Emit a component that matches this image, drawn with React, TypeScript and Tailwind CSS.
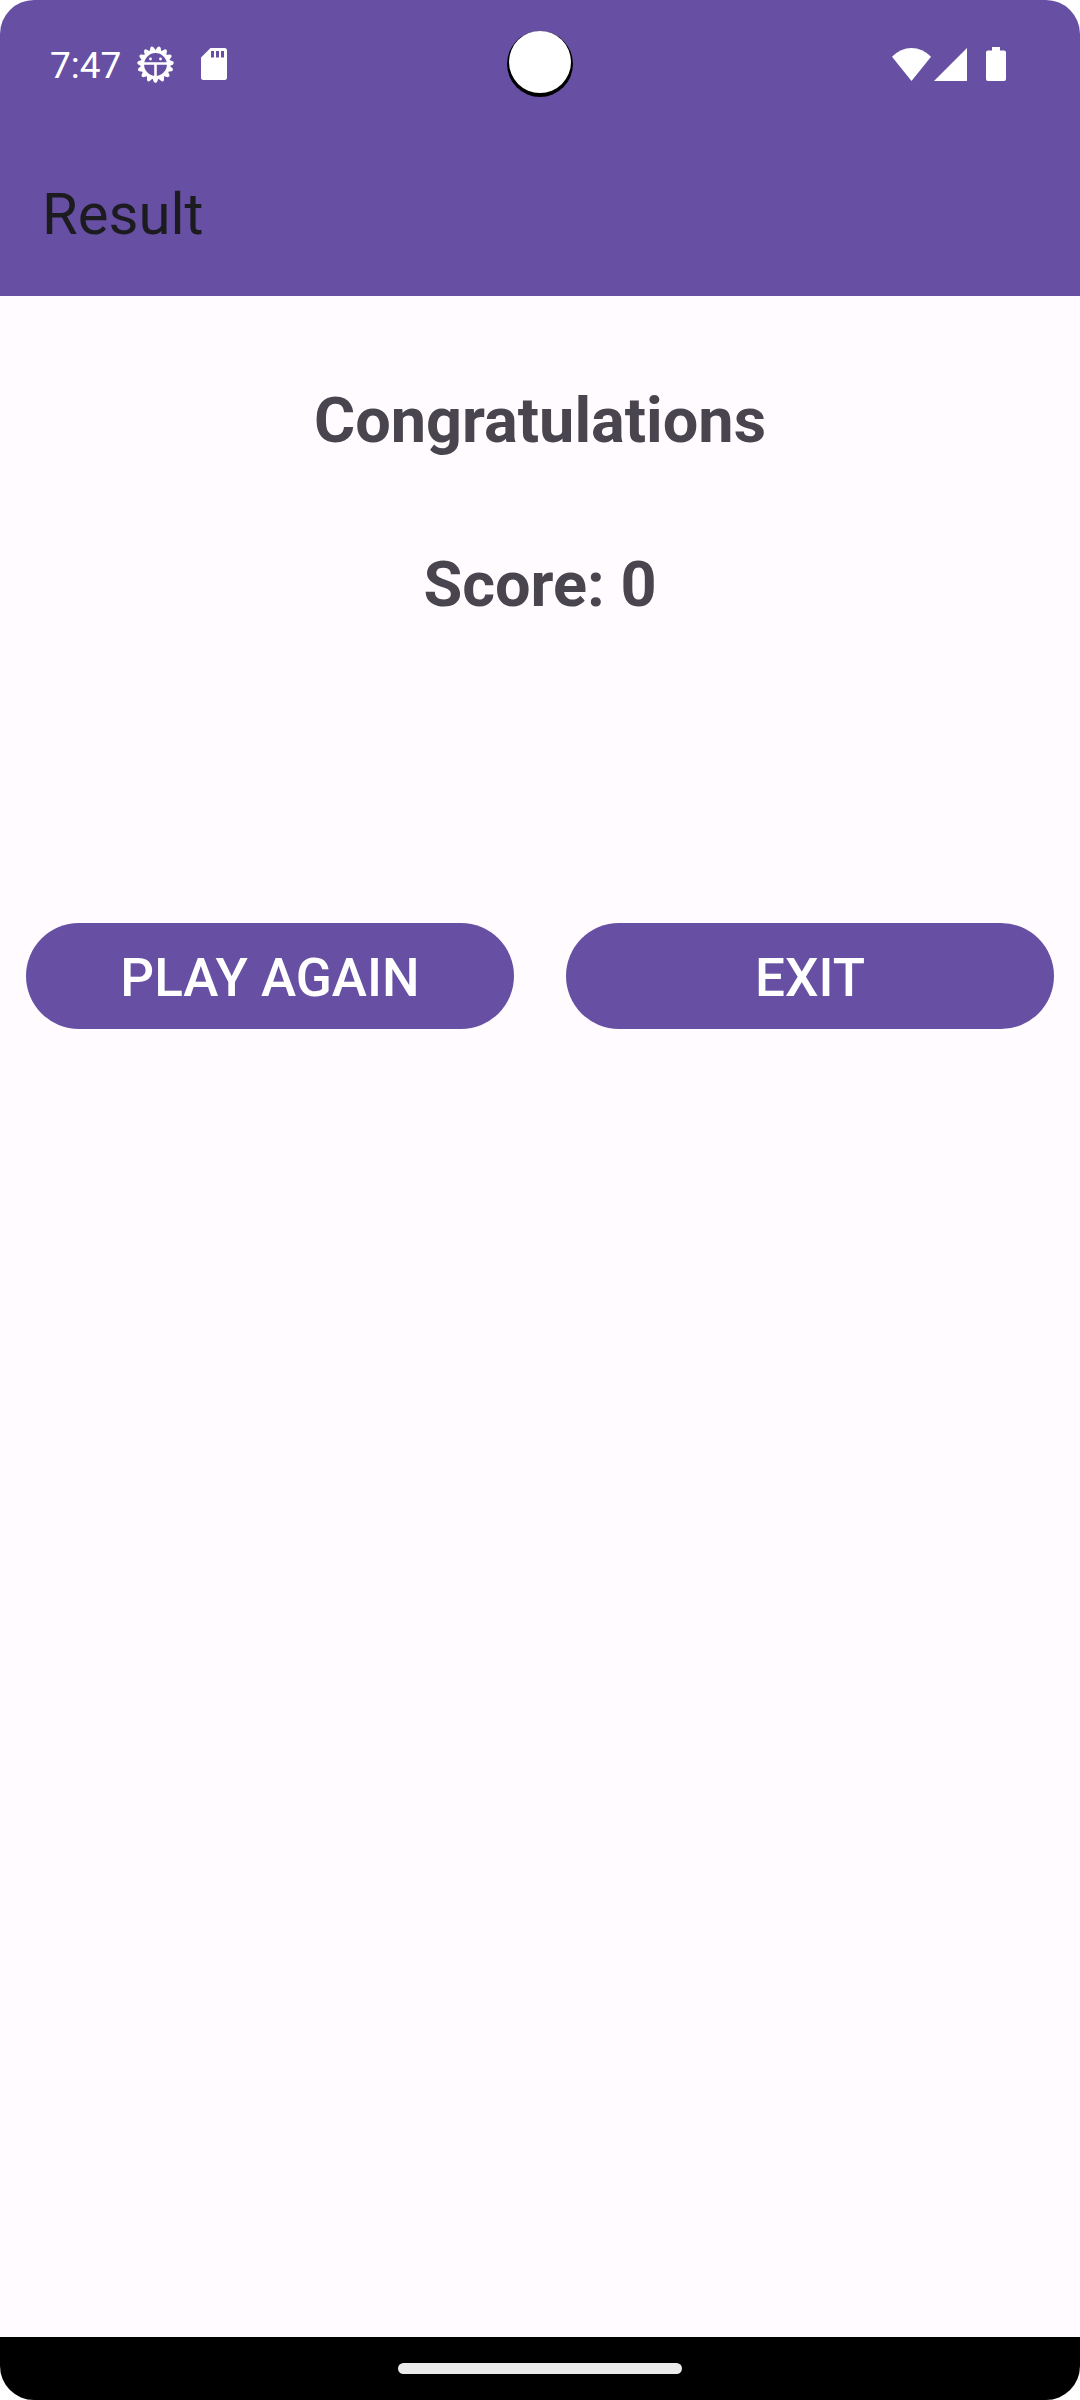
const teeth = Array.from({ length: 15 }, (_, i) => i * 24 + 12);

function DebugIcon() {
  return (
    <svg viewBox="0 0 37 37" className="h-[37px] w-[37px]" fill="none" aria-hidden="true">
      <circle cx="18.5" cy="18.5" r="13" stroke="#fff" strokeWidth="3.2" />
      {teeth.map((a) => (
        <path key={a} d="M14.9 5.500L17 1Q18.500 -0.700 20 1L22.100 5.500Z" fill="#fff" transform={`rotate(${a} 18.5 18.5)`} />
      ))}
      <path d="M6 17.500H31M18.500 17.500V31" stroke="#fff" strokeWidth="2.600" />
      <circle cx="13.500" cy="13" r="1.400" fill="#fff" />
      <circle cx="23.500" cy="13" r="1.400" fill="#fff" />
    </svg>
  );
}

function SdCardIcon() {
  return (
    <svg viewBox="0 0 26 32" className="h-8 w-[26px]" aria-hidden="true">
      <path
        fill="#fff"
        fillRule="evenodd"
        d="M9.500 0H23.500Q26 0 26 2.500V29.500Q26 32 23.500 32H2.500Q0 32 0 29.500V9.500ZM10 3V9.500H13V3ZM15 3V9.500H18V3ZM20 3V9.500H23V3Z"
      />
    </svg>
  );
}

function WifiIcon() {
  return (
    <svg viewBox="0 0 39 33" className="h-[33px] w-[39px]" aria-hidden="true">
      <path fill="#fff" d="M19.500 33L0 8.800Q8.500 0 19.500 0T39 8.800Z" />
    </svg>
  );
}

function SignalIcon() {
  return (
    <svg viewBox="0 0 33 33" className="h-[33px] w-[33px]" aria-hidden="true">
      <path fill="#fff" d="M33 0V33H0Z" />
    </svg>
  );
}

function BatteryIcon() {
  return (
    <svg viewBox="0 0 20 34" className="h-[34px] w-5" aria-hidden="true">
      <path fill="#fff" d="M6 0H14V3.500H18Q20 3.500 20 5.500V32Q20 34 18 34H2Q0 34 0 32V5.500Q0 3.500 2 3.500H6Z" />
    </svg>
  );
}

function StatusBar() {
  return (
    <div className="relative flex h-32 items-center justify-between pr-[74px] pl-[50px] text-white">
      <div className="flex items-center">
        <span className="pt-1 text-[37px] leading-10">7:47</span>
        <span className="ml-4">
          <DebugIcon />
        </span>
        <span className="ml-[27px]">
          <SdCardIcon />
        </span>
      </div>
      <div className="flex items-center">
        <WifiIcon />
        <span className="ml-[3px]">
          <SignalIcon />
        </span>
        <span className="ml-[19px]">
          <BatteryIcon />
        </span>
      </div>
      <div className="absolute top-[31px] left-1/2 flex h-[66px] w-[66px] -translate-x-1/2 justify-center rounded-full bg-black">
        <div className="h-[62px] w-[62px] rounded-full bg-white" />
      </div>
    </div>
  );
}

function ActionButton({ children }: { children: string }) {
  return (
    <button
      type="button"
      className="h-[106px] flex-1 rounded-full bg-[#6750a3] pt-1 text-[53px] leading-16 font-medium text-white"
    >
      {children}
    </button>
  );
}

export default function App() {
  return (
    <div className="min-h-screen bg-white font-[Roboto,sans-serif]">
      <div className="flex min-h-screen flex-col overflow-hidden rounded-[34px] bg-[#fffbff]">
        <header className="bg-[#6750a3]">
          <StatusBar />
          <div className="flex h-42 items-center px-[42px] pt-1">
            <h1 className="text-[58px] leading-[68px] text-[#1c1b1f]">Result</h1>
          </div>
        </header>
        <main className="flex-1 pt-[87px] text-[#49454f]">
          <h2 className="text-center text-[63px] leading-[76px] font-bold">Congratulations</h2>
          <p className="mt-[88px] text-center text-[63px] leading-[76px] font-bold">Score: 0</p>
          <div className="mt-[300px] flex gap-[52px] px-[26px]">
            <ActionButton>PLAY AGAIN</ActionButton>
            <ActionButton>EXIT</ActionButton>
          </div>
        </main>
        <footer className="flex h-[63px] items-center justify-center bg-black">
          <div className="h-[11px] w-71 rounded-full bg-[#ebebeb]" />
        </footer>
      </div>
    </div>
  );
}
